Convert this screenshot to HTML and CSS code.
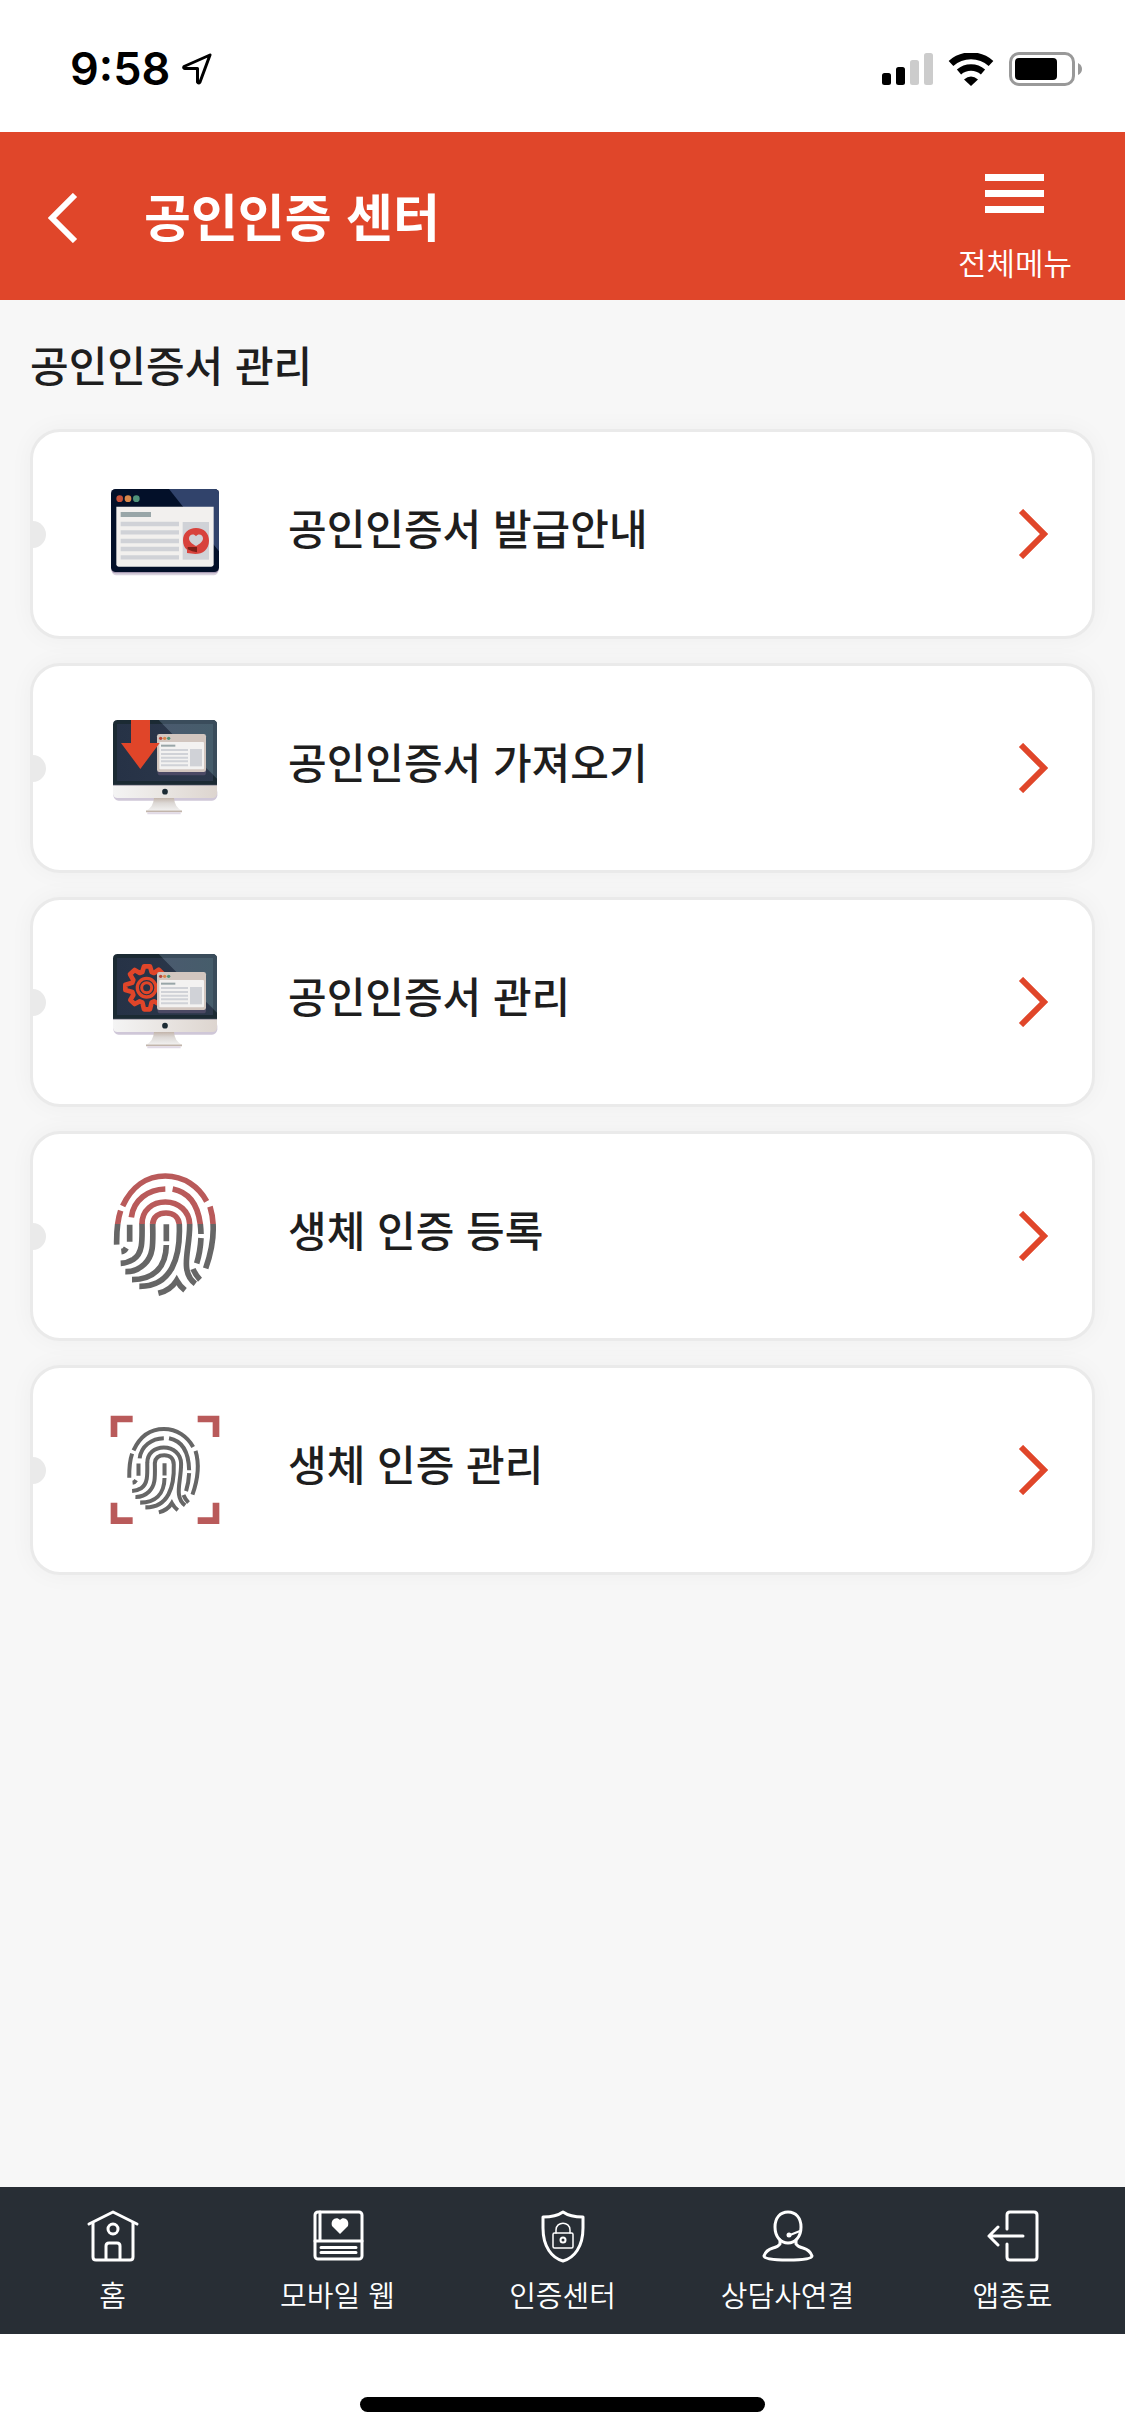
FILE: index.html
```html
<!DOCTYPE html>
<html lang="ko">
<head>
    <meta charset="UTF-8">
    <meta name="viewport" content="width=device-width, initial-scale=1.0">
    <title>공인인증 센터</title>
    <link rel="stylesheet" href="styles.css">
</head>
<body>
    <!-- Status bar -->
    <div class="status-bar">
        <div class="status-left">
            <span class="time">9:58</span>
            <svg width="30" height="32" viewBox="0 0 30 32" fill="none" stroke="#000" stroke-width="3" stroke-linejoin="round"><path d="M28 2 L2 13.500 Q1 15 3 15.500 H15.500 V29 Q16.500 31 18 29 Z"/></svg>
        </div>
        <div class="status-right">
            <svg width="51" height="33" viewBox="0 0 51 33">
                <rect x="0" y="20" width="9" height="12" rx="2.500"/>
                <rect x="14" y="14" width="9" height="18" rx="2.500"/>
                <rect x="28" y="7" width="9" height="25" rx="2.500" fill="#ccc"/>
                <rect x="42" y="0" width="9" height="32" rx="2.500" fill="#ccc"/>
            </svg>
            <svg width="46" height="33" viewBox="0 0 46 33">
                <path d="M3 10.500 A30 30 0 0 1 43 10.500" fill="none" stroke="#000" stroke-width="7"/>
                <path d="M11 19 A18.500 18.500 0 0 1 35 19" fill="none" stroke="#000" stroke-width="6.500"/>
                <path d="M16 26.500 Q23 20.500 30 26.500 L23 33 Z"/>
            </svg>
            <svg width="73" height="34" viewBox="0 0 73 34">
                <rect x="1.500" y="1.500" width="63" height="31" rx="8.500" fill="none" stroke="#999" stroke-width="3"/>
                <rect x="6" y="6" width="42" height="22" rx="4"/>
                <path d="M69 11 Q73 13 73 17 Q73 21 69 23 Z" fill="#999"/>
            </svg>
        </div>
    </div>

    <header class="header">
        <button class="back-btn" type="button" aria-label="뒤로">
            <svg width="30" height="50" viewBox="0 0 30 50" fill="none" stroke="#fff" stroke-width="6"><path d="M27 2 L4 25 L27 48"/></svg>
        </button>
        <h1>공인인증 센터</h1>
        <button class="menu-btn" type="button">
            <svg width="59" height="39" viewBox="0 0 59 39" fill="#fff">
                <rect width="59" height="7"/>
                <rect y="16" width="59" height="7"/>
                <rect y="32" width="59" height="7"/>
            </svg>
            <span>전체메뉴</span>
        </button>
    </header>

    <main class="content">
        <h2>공인인증서 관리</h2>
        <div class="card-list">
            <a class="card" href="#">
                <!-- browser window with ribbon -->
                <svg class="card-icon" viewBox="0 -33 450 450">
                    <rect x="65" y="66" width="320" height="250" rx="14" fill="#b3a5bd" opacity=".5"/>
                    <rect x="63" y="57" width="324" height="253" rx="14" fill="#a89bb3"/>
                    <rect x="63" y="57" width="324" height="249" rx="14" fill="#031029"/>
                    <path d="M237 57 H373 Q387 57 387 71 V244 L279 110 Z" fill="#31436b"/>
                    <circle cx="89" cy="86" r="10" fill="#c4503a"/>
                    <circle cx="114" cy="86" r="10" fill="#d9874a"/>
                    <circle cx="139" cy="86" r="10" fill="#4f9279"/>
                    <path d="M79 110 H371 V283 Q371 290 364 290 H86 Q79 290 79 283 Z" fill="#f2f0ee"/>
                    <rect x="92" y="126" width="91" height="15" fill="#99a6a8"/>
                    <path d="M92 162 H267 M92 187 H267 M92 213 H267 M92 237 H267 M92 262 H267" stroke="#d0d2d7" stroke-width="13"/>
                    <rect x="278" y="156" width="79" height="113" fill="#d0d2d7"/>
                    <path d="M318 174 C342 174 357 190 357 212 C357 238 338 252 316 252 L291 249 V239 C283 233 279 224 279 211 C279 189 295 174 318 174 Z" fill="#d8423c"/>
                    <path d="M318 228 C306 222 297 215 297 205 C297 193 312 190 318 199 C324 190 339 193 339 205 C339 215 330 222 318 228 Z" fill="#d0d2d7"/>
                    <path d="M293 231 L321 231 V247 Q306 245 293 238 Z" fill="#7d1f18"/>
                </svg>
                <span class="card-title">공인인증서 발급안내</span>
                <svg class="chevron" viewBox="0 0 30 50"><path d="M3 2 L26 25 L3 48"/></svg>
            </a>
            <a class="card" href="#">
                <!-- monitor with download arrow -->
                <svg class="card-icon" viewBox="0 -21 450 450">
                    <defs>
                        <linearGradient id="stand" x1="0" y1="0" x2="0" y2="1"><stop offset="0" stop-color="#c2b4aa"/><stop offset=".4" stop-color="#dcd8d5"/><stop offset="1" stop-color="#f2f1f0"/></linearGradient>
                        <linearGradient id="base"><stop offset="0" stop-color="#f4f4f4"/><stop offset="1" stop-color="#ddd5cf"/></linearGradient>
                        <linearGradient id="screen"><stop offset="0" stop-color="#263246"/><stop offset="1" stop-color="#2c384b"/></linearGradient>
                        <linearGradient id="glare"><stop offset="0" stop-color="#4a5a6e"/><stop offset="1" stop-color="#465d6b"/></linearGradient>
                        <g id="monitor">
                            <rect x="70" y="260" width="312" height="42" rx="16" fill="#cfc7d8"/>
                            <path d="M69 254 H381 V280 Q381 294 367 294 H83 Q69 294 69 280 Z" fill="url(#base)"/>
                            <path d="M69 256 V74 Q69 60 83 60 H367 Q381 60 381 74 V256 Z" fill="#1b2a33"/>
                            <rect x="81" y="72" width="288" height="171" fill="url(#screen)"/>
                            <path d="M206 60 H367 Q381 60 381 74 V236 L340 196 Z" fill="#3a4c5b"/>
                            <path d="M218 72 H369 V223 L340 196 Z" fill="url(#glare)"/>
                            <path d="M69 256 H381" stroke="#b4abb9" stroke-width="2"/>
                            <circle cx="225" cy="275" r="8.500" fill="#1b2a33"/>
                            <path d="M192 294 H252 Q254 322 276 332 H168 Q190 322 192 294 Z" fill="url(#stand)"/>
                            <path d="M168 334 H276" stroke="#c2b5ab" stroke-width="5"/>
                            <path d="M172 340 H272" stroke="#e1dae6" stroke-width="6"/>
                        </g>
                        <g id="window">
                            <rect x="203" y="110" width="145" height="116" rx="8" fill="#4b4964"/>
                            <rect x="201" y="102" width="147" height="114" rx="7" fill="#d2c6bf"/>
                            <circle cx="212" cy="115" r="5" fill="#b9463a"/>
                            <circle cx="224" cy="115" r="5" fill="#d9874a"/>
                            <circle cx="236" cy="115" r="5" fill="#4f9279"/>
                            <rect x="208" y="126" width="134" height="82" rx="3" fill="#f3f2f1"/>
                            <rect x="213" y="134" width="43" height="6" fill="#99a6a8"/>
                            <path d="M213 150 H294 M213 162 H294 M213 173 H294 M213 184 H294 M213 196 H294" stroke="#d0d2d7" stroke-width="6"/>
                            <rect x="300" y="147" width="36" height="52" fill="#d0d2d7"/>
                        </g>
                    </defs>
                    <use href="#monitor"/>
                    <use href="#window"/>
                    <path d="M123 60 H180 V129 H209 L151 207 L93 129 H123 Z" fill="#e04529"/>
                </svg>
                <span class="card-title">공인인증서 가져오기</span>
                <svg class="chevron" viewBox="0 0 30 50"><path d="M3 2 L26 25 L3 48"/></svg>
            </a>
            <a class="card" href="#">
                <!-- monitor with gear -->
                <svg class="card-icon" viewBox="0 -21 450 450">
                    <use href="#monitor"/>
                    <g fill="none" stroke="#e04529" stroke-linejoin="round">
                        <path stroke-width="14" d="M157 114 L162 97 H180 L185 114 L192 117 L206 107 L219 120 L210 135 L213 142 L230 148 V170 L213 176 L210 183 L219 198 L206 210 L192 202 L185 205 L180 226 H162 L157 205 L149 202 L134 210 L121 198 L130 183 L127 174 L106 168 V152 L127 146 L130 138 L120 121 L134 108 L149 117 Z"/>
                        <circle cx="170" cy="161" r="28" stroke-width="10"/>
                        <circle cx="170" cy="161" r="15" stroke-width="9"/>
                    </g>
                    <use href="#window" y="12"/>
                </svg>
                <span class="card-title">공인인증서 관리</span>
                <svg class="chevron" viewBox="0 0 30 50"><path d="M3 2 L26 25 L3 48"/></svg>
            </a>
            <a class="card" href="#">
                <!-- fingerprint, red above the scan line -->
                <svg class="card-icon" viewBox="0 3 450 450">
                    <defs>
                        <clipPath id="above"><rect width="450" height="192"/></clipPath>
                        <clipPath id="below"><rect y="192" width="450" height="258"/></clipPath>
                        <g id="print" fill="none" stroke-width="17">
                            <path d="M98 138 C125 80 170 48 226 48 C282 48 326 80 350 124"/>
                            <path d="M92 152 Q79 190 80 254"/>
                            <path d="M360 140 C376 192 370 260 347 325"/>
                            <path d="M124 172 C130 120 175 88 226 87"/>
                            <path d="M248 87 C300 97 331 140 333 222"/>
                            <path d="M119 194 V245"/>
                            <path d="M333 234 Q331 275 320 310"/>
                            <path d="M156 192 C156 150 188 126 226 126 C266 126 299 154 299 195 C299 250 285 290 290 325 Q294 355 316 371"/>
                            <path d="M156 190 C157 245 158 280 130 298 Q112 309 92 310"/>
                            <path d="M188 192 C190 170 206 159 228 159 C251 159 268 172 268 198 C271 290 246 380 148 379"/>
                            <path d="M188 190 C189 250 192 285 163 313 Q139 336 106 335"/>
                            <path d="M229 193 V244"/>
                            <path d="M229 255 C228 325 188 359 126 359"/>
                            <path d="M94 275 Q103 274 109 264"/>
                            <path d="M205 400 Q242 391 260 361 Q270 379 285 391"/>
                            <path d="M309 327 Q317 346 330 359"/>
                        </g>
                    </defs>
                    <use href="#print" stroke="#b95a5a" clip-path="url(#above)"/>
                    <use href="#print" stroke="#666" clip-path="url(#below)"/>
                </svg>
                <span class="card-title">생체 인증 등록</span>
                <svg class="chevron" viewBox="0 0 30 50"><path d="M3 2 L26 25 L3 48"/></svg>
            </a>
            <a class="card" href="#">
                <!-- fingerprint in a scan frame -->
                <svg class="card-icon" viewBox="0 -15 450 450">
                    <path d="M72 111 V57 H128 M323 57 H378 V111 M378 308 V362 H323 M128 362 H72 V308" fill="none" stroke="#b95a5a" stroke-width="20"/>
                    <use href="#print" stroke="#666" transform="translate(61 53) scale(.71)"/>
                </svg>
                <span class="card-title">생체 인증 관리</span>
                <svg class="chevron" viewBox="0 0 30 50"><path d="M3 2 L26 25 L3 48"/></svg>
            </a>
        </div>
    </main>

    <nav class="bottom-nav">
        <a href="#">
            <svg viewBox="0 0 54 54">
                <path d="M3 15 L27 3 L51 15"/>
                <path d="M7 14 V48 Q7 51 10 51 H44 Q47 51 47 48 V14 M20 51 V37 Q20 34 23 34 H31 Q34 34 34 37 V51"/>
                <circle cx="27" cy="20" r="5"/>
            </svg>
            <span>홈</span>
        </a>
        <a href="#">
            <svg viewBox="0 0 54 54">
                <rect x="4" y="3" width="47" height="47" rx="3"/>
                <path d="M9 3 V32 M4 32 H51 M10 38.500 H45 M10 43.500 H45"/>
                <path d="M29 25 L21 17 C19 10 26 7 29 11 C32 7 39 10 37 17 Z" fill="#fff" stroke="none"/>
            </svg>
            <span>모바일 웹</span>
        </a>
        <a href="#">
            <svg viewBox="0 0 54 54">
                <path d="M27 3 Q34 8 47 8 V19 C47 38 38 49 27 52 C16 49 7 38 7 19 V8 Q20 8 27 3 Z"/>
                <path d="M20 24 V21 C20 12 34 12 34 21 V24" stroke-width="1.500"/>
                <rect x="17" y="24" width="20" height="15" rx="1.500" stroke-width="1.500"/>
                <circle cx="27" cy="31" r="2.500" stroke-width="2"/>
            </svg>
            <span>인증센터</span>
        </a>
        <a href="#">
            <svg viewBox="0 0 54 54">
                <path d="M27 3 C35 3 40 9 40 18 C40 28 34 34 27 34 C20 34 14 28 14 18 C14 9 19 3 27 3 Z"/>
                <path d="M19 31 V35 Q17 38 12 39 Q5 41 3 47 Q3 51 27 51 Q51 51 51 47 Q49 41 42 39 Q37 38 35 35 V31"/>
                <path d="M29 26 L39 22" stroke-width="2"/>
                <circle cx="28" cy="26" r="2.500" fill="#fff" stroke="none"/>
            </svg>
            <span>상담사연결</span>
        </a>
        <a href="#">
            <svg viewBox="0 0 54 54">
                <path d="M21 20 V6 Q21 3 24 3 H48 Q51 3 51 6 V48 Q51 51 48 51 H24 Q21 51 21 48 V35"/>
                <path d="M37 27 H3 M12 18 L3 27 L12 36"/>
            </svg>
            <span>앱종료</span>
        </a>
    </nav>
    <div class="home-area"><div class="home-indicator"></div></div>
</body>
</html>
```
FILE: styles.css
```css
* { box-sizing: border-box; }
body { margin: 0; min-height: 100vh; display: flex; flex-direction: column; background-color: #fff; color: #1e1e1e; font-family: "Noto Sans CJK KR", "Noto Sans", sans-serif; }
a { color: inherit; text-decoration: none; }
button { background: none; border: none; padding: 0; color: inherit; font-family: inherit; cursor: pointer; }
svg { display: block; flex-shrink: 0; }

.status-bar { height: 132px; padding: 6px 43px 0 70px; display: flex; justify-content: space-between; align-items: center; }
.status-left { display: flex; align-items: center; gap: 12px; }
.status-right { display: flex; align-items: center; gap: 15px; }
.time { font-family: Inter, sans-serif; font-size: 45px; font-weight: 600; color: #000; line-height: 56px; }

.header { height: 168px; padding: 0 53px 0 48px; display: flex; align-items: center; background-color: #e0462a; color: #fff; }
.header h1 { flex: 1; margin: 0; padding: 0 0 3px 66px; font-size: 51px; font-weight: 700; line-height: 64px; }
.back-btn { padding-top: 3px; }
.menu-btn { display: flex; flex-direction: column; align-items: center; gap: 29px; padding-top: 24px; font-size: 31px; font-weight: 350; line-height: 40px; }

.content { flex: 1; padding: 34px 30px; background-color: #f7f7f7; }
.content h2 { margin: 0 0 35px; font-size: 42px; font-weight: 500; line-height: 60px; }
.card-list { display: flex; flex-direction: column; gap: 24px; }
.card { position: relative; height: 210px; padding: 0 44px 0 57px; display: flex; align-items: center; overflow: hidden; background-color: #fff; border: 3px solid #eaeaea; border-radius: 30px; box-shadow: 0 0 24px rgba(0,0,0,0.04); }
.card::before { content: ""; position: absolute; left: -14px; top: 89px; width: 27px; height: 27px; border-radius: 50%; background-color: #eaeaea; }
.card-icon { width: 150px; height: 150px; }
.card-title { flex: 1; padding: 0 0 15px 48px; font-size: 42px; font-weight: 500; line-height: 60px; }
.chevron { width: 30px; height: 50px; fill: none; stroke: #e0462a; stroke-width: 6; }

.bottom-nav { height: 147px; display: grid; grid-template-columns: repeat(5, 1fr); background-color: #282e35; color: #fff; }
.bottom-nav a { display: flex; flex-direction: column; align-items: center; padding-top: 22px; gap: 11px; font-size: 29px; font-weight: 350; line-height: 40px; }
.bottom-nav svg { width: 54px; height: 54px; fill: none; stroke: #fff; stroke-width: 3; stroke-linecap: round; stroke-linejoin: round; }

.home-area { height: 102px; display: flex; justify-content: center; align-items: flex-end; padding-bottom: 24px; }
.home-indicator { width: 36%; height: 15px; border-radius: 8px; background-color: #000; }
```
